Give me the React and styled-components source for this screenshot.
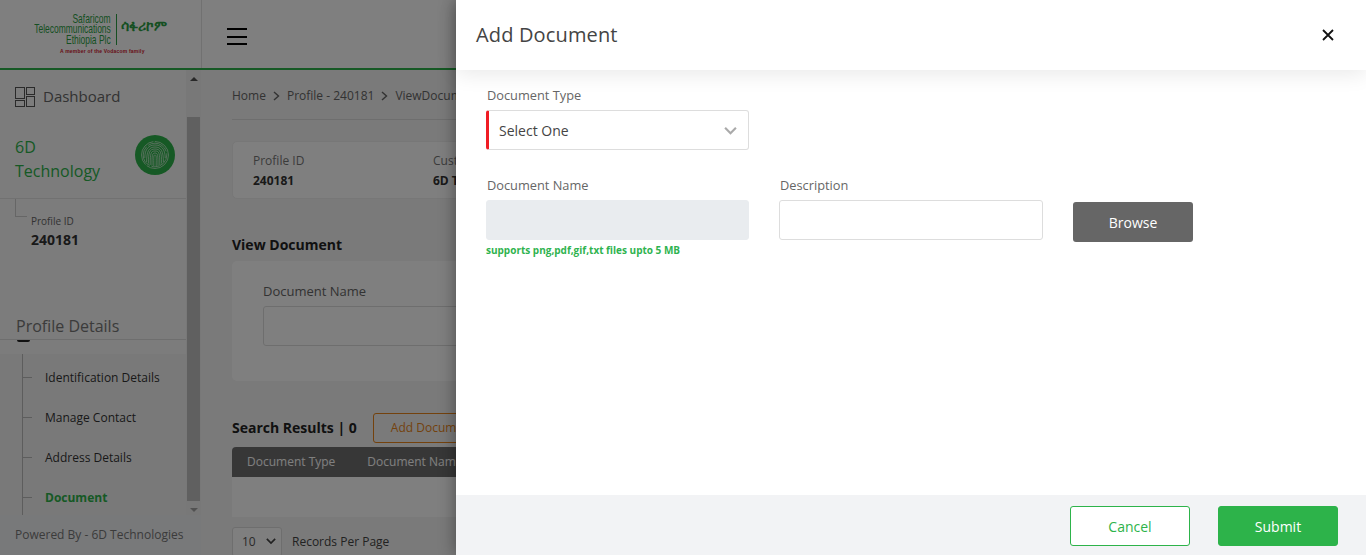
import React from "react";
import styled, { createGlobalStyle } from "styled-components";

const Global = createGlobalStyle`
  html, body { margin: 0; padding: 0; height: 100%; overflow: hidden; background: #fff; }
  body { font-family: "Open Sans", "Noto Sans", sans-serif; color: #333; }
  * { box-sizing: border-box; }
`;

const Page = styled.div`
  position: relative;
  width: 1366px;
  height: 555px;
  overflow: hidden;
  display: grid;
  grid-template-rows: 70px 1fr;
  background: #f4f4f4;
`;

const TopBar = styled.header`
  display: flex;
  align-items: stretch;
  background: #fff;
  border-bottom: 2px solid #2db34a;
`;

const LogoCell = styled.div`
  width: 202px;
  border-right: 1px solid #e2e2e2;
  display: flex;
  flex-direction: column;
  align-items: flex-start;
  padding: 14px 0 0 34px;
`;

const LogoRow = styled.div`
  display: flex;
  align-items: center;
  height: 31px;
`;

const LogoWords = styled.div`
  width: 77px;
  font: 400 13px/10.6px "Liberation Sans", sans-serif;
  color: #2c9f45;
  text-align: right;
  white-space: nowrap;
  display: flex;
  flex-direction: column;
  align-items: flex-end;
`;

const LogoWord = styled.span`
  display: block;
  transform: scaleX(0.65);
  transform-origin: right center;
`;

const LogoBar = styled.span`
  width: 1px;
  height: 31px;
  background: #2c9f45;
  margin: 0 4px 0 5px;
`;

const LogoAmharic = styled.span`
  font: 700 13.5px/1 "DejaVu Sans", sans-serif;
  color: #2c9f45;
  white-space: nowrap;
  margin-top: -5px;
`;

const LogoTag = styled.div`
  margin: 3px 0 0 26px;
  font: 700 5px/6px "Liberation Sans", sans-serif;
  letter-spacing: 0.2px;
  color: #d0202e;
  white-space: nowrap;
`;

const Burger = styled.div`
  margin: 28px 0 0 25px;
  width: 20px;
  height: 17px;
  display: flex;
  flex-direction: column;
  justify-content: space-between;
`;

const BurgerLine = styled.span`
  height: 2px;
  background: #000;
`;

const Body = styled.div`
  display: grid;
  grid-template-columns: 201px 1fr;
  min-height: 0;
`;

const SideColumn = styled.aside`
  position: relative;
  display: grid;
  grid-template-columns: 186px 15px;
  overflow: hidden;
  height: 485px;
`;

const SideScroll = styled.div`
  background: #f8f8f8;
  display: flex;
  flex-direction: column;
  padding-bottom: 40px;
`;

const DashRow = styled.div`
  display: flex;
  align-items: center;
  gap: 8px;
  height: 53px;
  padding: 0 0 0 15px;
  font-size: 15px;
  color: #666;
`;

const DashText = styled.span`
  margin-top: -2px;
`;

const OrgRow = styled.div`
  height: 76px;
  padding: 0 11px 0 15px;
  display: flex;
  justify-content: space-between;
  align-items: flex-start;
  border-bottom: 1px solid #e2e2e2;
`;

const OrgName = styled.div`
  font-size: 16px;
  line-height: 24px;
  color: #2db34a;
  padding-top: 12px;
`;

const OrgBadge = styled.div`
  width: 40px;
  height: 40px;
  margin-top: 12px;
  border-radius: 50%;
  background: #2db34a;
  display: flex;
  align-items: center;
  justify-content: center;
`;

const ProfileBlock = styled.div`
  position: relative;
  height: 120px;
  padding: 15px 0 0 31px;
  &::before {
    content: "";
    position: absolute;
    left: 15px;
    top: 0;
    width: 11px;
    height: 17px;
    border-left: 1px solid #ccc;
    border-bottom: 1px solid #ccc;
  }
`;

const ProfileLabel = styled.div`
  font-size: 10px;
  line-height: 14px;
  color: #666;
`;

const ProfileValue = styled.div`
  margin-top: 1px;
  font-size: 14px;
  line-height: 22px;
  font-weight: 700;
  color: #333;
`;

const SectionTitle = styled.div`
  height: 21px;
  padding-left: 16px;
  font-size: 16px;
  line-height: 14px;
  color: #777;
  border-bottom: 1px solid #ddd;
`;

const SectionGap = styled.div`
  height: 14px;
  position: relative;
  &::after {
    content: "";
    position: absolute;
    left: 17px;
    top: 0;
    width: 13px;
    height: 1.5px;
    border-radius: 0 0 8px 8px;
    background: #222;
  }
`;

const Menu = styled.ul`
  position: relative;
  list-style: none;
  margin: 0;
  padding: 4px 0 0 0;
  flex: 1;
  background: #f2f2f2;
  &::before {
    content: "";
    position: absolute;
    left: 22px;
    top: 0;
    bottom: 0;
    width: 1px;
    background: #bbb;
  }
`;

const MenuItem = styled.li`
  position: relative;
  height: 40px;
  padding-left: 45px;
  line-height: 40px;
  font-size: 12px;
  font-weight: ${p => (p.$active ? 700 : 400)};
  color: ${p => (p.$active ? "#2db34a" : "#333")};
  &::before {
    content: "";
    position: absolute;
    left: 22px;
    top: 19px;
    width: 10px;
    height: 1px;
    background: #bbb;
  }
`;

const ScrollTrack = styled.div`
  background: #f1f1f1;
  display: flex;
  flex-direction: column;
  align-items: center;
  padding: 0 1px 40px;
`;

const ScrollArrow = styled.div`
  height: 17px;
  display: flex;
  align-items: center;
  justify-content: center;
  font-size: 0;
  &::before {
    content: "";
    border-left: 4px solid transparent;
    border-right: 4px solid transparent;
    ${p => (p.$up ? "border-bottom: 4px solid #505050;" : "border-top: 4px solid #a3a3a3;")}
  }
`;

const ScrollSpace = styled.div`
  height: 30px;
`;

const ScrollThumb = styled.div`
  width: 13px;
  flex: 1;
  background: #c1c1c1;
`;

const SideFooter = styled.div`
  position: absolute;
  left: 0;
  right: 0;
  bottom: 0;
  height: 40px;
  padding-left: 15px;
  line-height: 40px;
  font-size: 12px;
  color: #777;
  background: #f1f2f4;
`;

const Main = styled.main`
  padding: 0 0 0 31px;
  min-width: 0;
  overflow: hidden;
`;

const Crumbs = styled.div`
  height: 50px;
  display: flex;
  align-items: center;
  gap: 6px;
  width: 400px;
  font-size: 12px;
  color: #666;
  border-bottom: 1px solid #ddd;
  padding-top: 2px;
`;

const CrumbText = styled.span`
  white-space: nowrap;
`;

const CrumbSep = styled.svg`
  width: 9px;
  height: 10px;
`;

const SummaryCard = styled.section`
  margin-top: 21px;
  width: 900px;
  height: 58px;
  padding: 10px 20px;
  background: #fff;
  border: 1px solid #eee;
  border-radius: 5px;
  display: flex;
`;

const SummaryCol = styled.div`
  width: 180px;
`;

const SummaryLabel = styled.div`
  font-size: 12px;
  line-height: 18px;
  color: #777;
`;

const SummaryValue = styled.div`
  margin-top: 2px;
  font-size: 12px;
  line-height: 18px;
  font-weight: 700;
  color: #333;
`;

const Heading = styled.h2`
  margin: 36px 0 0;
  font-size: 14px;
  line-height: 20px;
  font-weight: 700;
  color: #222;
`;

const SearchCard = styled.section`
  margin-top: 6px;
  width: 900px;
  height: 120px;
  padding: 21px 31px;
  background: #fff;
  border-radius: 5px;
`;

const SearchLabel = styled.div`
  font-size: 13px;
  line-height: 18px;
  color: #666;
`;

const SearchInput = styled.div`
  margin-top: 6px;
  width: 300px;
  height: 40px;
  border: 1px solid #ddd;
  border-radius: 3px;
`;

const ResultsBar = styled.div`
  margin-top: 32px;
  display: flex;
  align-items: center;
  gap: 16px;
  height: 30px;
  font-size: 14px;
  font-weight: 700;
  color: #222;
`;

const ResultsText = styled.span`
  margin-top: -2px;
`;

const AddButton = styled.div`
  width: 160px;
  height: 30px;
  border: 1px solid #e8851a;
  border-radius: 3px;
  padding-left: 17px;
  line-height: 28px;
  font-size: 12px;
  font-weight: 400;
  color: #e8851a;
`;

const TableHead = styled.div`
  margin-top: 4px;
  width: 900px;
  height: 30px;
  background: #6f6f6f;
  border-radius: 4px 4px 0 0;
  display: flex;
  align-items: center;
  gap: 32px;
  padding: 0 0 2px 15px;
  font-size: 12px;
  color: #fff;
`;

const TableEmpty = styled.div`
  width: 900px;
  height: 40px;
  background: #fff;
`;

const PagerRow = styled.div`
  margin-top: 10px;
  display: flex;
  align-items: center;
  gap: 10px;
  font-size: 12px;
  color: #444;
`;

const PagerText = styled.span`
  margin-top: -2px;
`;

const PagerSelect = styled.div`
  width: 50px;
  height: 30px;
  border: 1px solid #ddd;
  border-radius: 3px;
  background: #fff;
  display: flex;
  align-items: center;
  justify-content: space-between;
  padding: 0 5px 2px 9px;
  color: #555;
`;

const Scrim = styled.div`
  position: absolute;
  inset: 0;
  background: rgba(0, 0, 0, 0.5);
`;

const Drawer = styled.aside`
  position: absolute;
  top: 0;
  right: 0;
  bottom: 0;
  width: 910px;
  background: #fff;
  display: grid;
  grid-template-rows: 70px 1fr 60px;
  box-shadow: 0 0 16px rgba(0, 0, 0, 0.4);
`;

const DrawerHead = styled.div`
  position: relative;
  display: flex;
  align-items: center;
  justify-content: space-between;
  padding: 0 30px 0 20px;
  background: #fff;
  box-shadow: 0 4px 20px rgba(0, 0, 0, 0.09);
`;

const DrawerTitle = styled.h1`
  margin: 0;
  font-size: 20px;
  font-weight: 400;
  line-height: 28px;
  letter-spacing: 0.15px;
  color: #444;
`;

const CloseButton = styled.button`
  width: 16px;
  height: 16px;
  padding: 0;
  border: 0;
  background: none;
  display: flex;
`;

const DrawerBody = styled.div`
  padding: 16px 30px 0;
`;

const Field = styled.div`
  width: ${p => (p.$wide ? "264px" : "263px")};
  display: flex;
  flex-direction: column;
`;

const Label = styled.label`
  height: 24px;
  padding-left: 1px;
  font-size: 12.8px;
  line-height: 18px;
  color: #666;
`;

const SelectBox = styled.div`
  height: 40px;
  display: flex;
  align-items: center;
  justify-content: space-between;
  padding: 0 11px 0 10px;
  border: 1px solid #ddd;
  border-left: 3px solid #f01c24;
  border-radius: 3px;
  font-size: 14px;
  color: #444;
`;

const Input = styled.div`
  height: 40px;
  border-radius: 3px;
  border: 1px solid ${p => (p.$disabled ? "#e9ecef" : "#ddd")};
  background: ${p => (p.$disabled ? "#e9ecef" : "#fff")};
`;

const Hint = styled.div`
  margin-top: 4px;
  font-size: 10px;
  line-height: 13px;
  font-weight: 700;
  color: #2fb34f;
  white-space: nowrap;
`;

const UploadRow = styled.div`
  margin-top: 26px;
  display: flex;
  align-items: flex-start;
  gap: 30px;
`;

const BrowseButton = styled.button`
  margin-top: 26px;
  width: 120px;
  height: 40px;
  border: 0;
  border-radius: 3px;
  background: #666;
  color: #fff;
  font: 400 14px "Open Sans", sans-serif;
`;

const DrawerFoot = styled.div`
  display: flex;
  justify-content: flex-end;
  align-items: flex-start;
  gap: 28px;
  padding: 11px 28px 0 0;
  background: #f2f3f5;
`;

const FootButton = styled.button`
  width: 120px;
  height: 40px;
  border-radius: 3px;
  border: 1px solid #2db34a;
  background: ${p => (p.$primary ? "#2db34a" : "#fff")};
  color: ${p => (p.$primary ? "#fff" : "#2db34a")};
  font: 400 14px "Open Sans", sans-serif;
`;

const DashIcon = () => (
  <svg width="20" height="20" viewBox="0 0 20 20" fill="none" stroke="#555" strokeWidth="1">
    <rect x="0.5" y="0.5" width="9" height="11" />
    <rect x="11.5" y="0.5" width="8" height="7" />
    <rect x="0.5" y="13.5" width="9" height="6" />
    <rect x="11.5" y="9.5" width="8" height="10" />
  </svg>
);

const Fingerprint = () => (
  <svg width="30" height="30" viewBox="0 0 30 30" fill="none" stroke="#fff" strokeWidth="0.7" opacity="0.85">
    <circle cx="15" cy="15" r="13.5" strokeDasharray="30 1.5" />
    <circle cx="15" cy="15" r="11.8" strokeDasharray="22 2" />
    <path d="M4.8 18c0-9 4-13 10.2-13s10.2 4 10.2 13" />
    <path d="M6.6 22c0-11 2.4-15 8.4-15s8.4 4 8.4 15" />
    <path d="M8.4 23.5c0-11 1-14.500 6.600-14.500s6.600 3.500 6.600 14.500" />
    <path d="M10.200 25c0-12 .6-14 4.800-14s4.800 2 4.800 14" />
    <path d="M12 25.500c0-10 0-12.500 3-12.500s3 2.500 3 12.500" />
    <path d="M13.800 26c0-9-.4-11 1.200-11s1.200 2 1.200 11" />
  </svg>
);

const Chevron = ({ size = 12, color = "#aaa", width = 2 }) => (
  <svg width={size} height={size} viewBox="0 0 12 12" fill="none" stroke={color} strokeWidth={width}>
    <path d="M1 3.5 6 8.5 11 3.5" />
  </svg>
);

const CrumbArrow = () => (
  <CrumbSep viewBox="0 0 9 10" fill="none" stroke="#666" strokeWidth="1.4">
    <path d="M2 1 6.500 5 2 9" />
  </CrumbSep>
);

export default function App() {
  return (
    <Page>
      <Global />
      <TopBar>
        <LogoCell>
          <LogoRow>
            <LogoWords>
              <LogoWord>Safaricom</LogoWord>
              <LogoWord>Telecommunications</LogoWord>
              <LogoWord>Ethiopia Plc</LogoWord>
            </LogoWords>
            <LogoBar />
            <LogoAmharic>ሳፋሪኮም</LogoAmharic>
          </LogoRow>
          <LogoTag>A member of the Vodacom family</LogoTag>
        </LogoCell>
        <Burger>
          <BurgerLine />
          <BurgerLine />
          <BurgerLine />
        </Burger>
      </TopBar>
      <Body>
        <SideColumn>
          <SideScroll>
            <DashRow>
              <DashIcon />
              <DashText>Dashboard</DashText>
            </DashRow>
            <OrgRow>
              <OrgName>
                6D
                <br />
                Technology
              </OrgName>
              <OrgBadge>
                <Fingerprint />
              </OrgBadge>
            </OrgRow>
            <ProfileBlock>
              <ProfileLabel>Profile ID</ProfileLabel>
              <ProfileValue>240181</ProfileValue>
            </ProfileBlock>
            <SectionTitle>Profile Details</SectionTitle>
            <SectionGap />
            <Menu>
              <MenuItem>Identification Details</MenuItem>
              <MenuItem>Manage Contact</MenuItem>
              <MenuItem>Address Details</MenuItem>
              <MenuItem $active>Document</MenuItem>
            </Menu>
          </SideScroll>
          <ScrollTrack>
            <ScrollArrow $up />
            <ScrollSpace />
            <ScrollThumb />
            <ScrollArrow />
          </ScrollTrack>
          <SideFooter>Powered By - 6D Technologies</SideFooter>
        </SideColumn>
        <Main>
          <Crumbs>
            <CrumbText>Home</CrumbText>
            <CrumbArrow />
            <CrumbText>Profile - 240181</CrumbText>
            <CrumbArrow />
            <CrumbText>ViewDocument</CrumbText>
          </Crumbs>
          <SummaryCard>
            <SummaryCol>
              <SummaryLabel>Profile ID</SummaryLabel>
              <SummaryValue>240181</SummaryValue>
            </SummaryCol>
            <SummaryCol>
              <SummaryLabel>Customer Name</SummaryLabel>
              <SummaryValue>6D Technology</SummaryValue>
            </SummaryCol>
          </SummaryCard>
          <Heading>View Document</Heading>
          <SearchCard>
            <SearchLabel>Document Name</SearchLabel>
            <SearchInput />
          </SearchCard>
          <ResultsBar>
            <ResultsText>Search Results | 0</ResultsText>
            <AddButton>Add Document</AddButton>
          </ResultsBar>
          <TableHead>
            <span>Document Type</span>
            <span>Document Name</span>
          </TableHead>
          <TableEmpty />
          <PagerRow>
            <PagerSelect>
              10 <Chevron size={10} color="#444" />
            </PagerSelect>
            <PagerText>Records Per Page</PagerText>
          </PagerRow>
        </Main>
      </Body>
      <Scrim />
      <Drawer>
        <DrawerHead>
          <DrawerTitle>Add Document</DrawerTitle>
          <CloseButton aria-label="Close">
            <svg width="16" height="16" viewBox="0 0 16 16" fill="none" stroke="#111" strokeWidth="1.8">
              <path d="M3 3 13 13M13 3 3 13" />
            </svg>
          </CloseButton>
        </DrawerHead>
        <DrawerBody>
          <Field>
            <Label>Document Type</Label>
            <SelectBox>
              Select One
              <Chevron size={13} />
            </SelectBox>
          </Field>
          <UploadRow>
            <Field>
              <Label>Document Name</Label>
              <Input $disabled />
              <Hint>supports png,pdf,gif,txt files upto 5 MB</Hint>
            </Field>
            <Field $wide>
              <Label>Description</Label>
              <Input />
            </Field>
            <BrowseButton>Browse</BrowseButton>
          </UploadRow>
        </DrawerBody>
        <DrawerFoot>
          <FootButton>Cancel</FootButton>
          <FootButton $primary>Submit</FootButton>
        </DrawerFoot>
      </Drawer>
    </Page>
  );
}
